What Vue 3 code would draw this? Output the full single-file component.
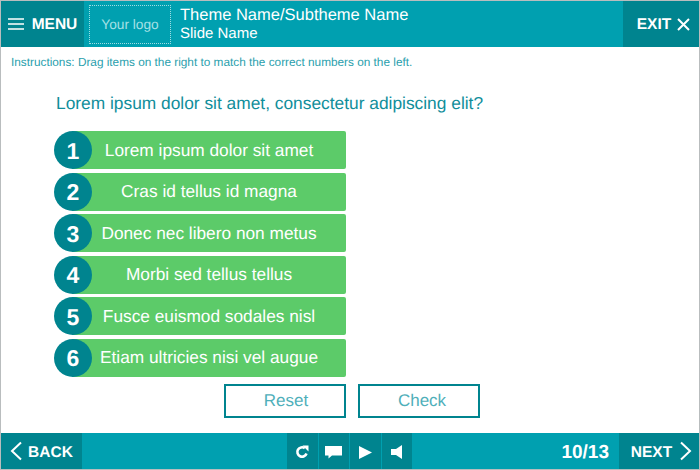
<template>
  <div class="slide">
    <header class="topbar">
      <button class="menu">
        <svg class="burger" width="16" height="12" viewBox="0 0 16 12"><path d="M0 1h16M0 6h16M0 11h16" stroke="#fff" stroke-width="1.4" /></svg>
        <span>MENU</span>
      </button>
      <div class="logo">Your logo</div>
      <div class="titles">
        <div class="theme">Theme Name/Subtheme Name</div>
        <div class="slide-name">Slide Name</div>
      </div>
      <button class="exit">
        <span>EXIT</span>
        <svg width="13" height="13" viewBox="0 0 13 13"><path d="M1 1l11 11M12 1L1 12" stroke="#fff" stroke-width="2" fill="none" /></svg>
      </button>
    </header>

    <main class="content">
      <p class="instructions">Instructions: Drag items on the right to match the correct numbers on the left.</p>
      <h1 class="question">Lorem ipsum dolor sit amet, consectetur adipiscing elit?</h1>
      <ul class="items">
        <li v-for="(item, i) in items" :key="item" class="item">
          <span class="num">{{ i + 1 }}</span>
          <span class="label">{{ item }}</span>
        </li>
      </ul>
      <div class="actions">
        <button class="action">Reset</button>
        <button class="action">Check</button>
      </div>
    </main>

    <footer class="bottombar">
      <button class="back">
        <svg width="13" height="20" viewBox="0 0 13 20"><path d="M11 1.500L2 10l9 8.500" stroke="#fff" stroke-width="2" fill="none" /></svg>
        <span>BACK</span>
      </button>
      <div class="controls">
        <button class="ctrl">
          <svg width="14" height="14" viewBox="0 0 14 14"><path d="M11.500 8.500A4.700 4.700 0 1 1 9.800 3.200" stroke="#fff" stroke-width="2.600" fill="none" /><path d="M7.500 0.500h6V6.500z" fill="#fff" /></svg>
        </button>
        <button class="ctrl">
          <svg width="17" height="14" viewBox="0 0 17 14"><path d="M0 1h17v9.500H7l-3.500 3v-3H0z" fill="#fff" /></svg>
        </button>
        <button class="ctrl">
          <svg width="13" height="13" viewBox="0 0 13 13"><path d="M0 0l13 6.500L0 13z" fill="#fff" /></svg>
        </button>
        <button class="ctrl">
          <svg width="12" height="14" viewBox="0 0 12 14"><path d="M11 0v14L5 10H0V4h5z" fill="#fff" /></svg>
        </button>
      </div>
      <div class="pager">10/13</div>
      <button class="next">
        <span>NEXT</span>
        <svg width="13" height="20" viewBox="0 0 13 20"><path d="M2 1.500L11 10l-9 8.500" stroke="#fff" stroke-width="2" fill="none" /></svg>
      </button>
    </footer>
  </div>
</template>

<script setup>
const items = [
  'Lorem ipsum dolor sit amet',
  'Cras id tellus id magna',
  'Donec nec libero non metus',
  'Morbi sed tellus tellus',
  'Fusce euismod sodales nisl',
  'Etiam ultricies nisi vel augue'
]
</script>

<style>
html, body {
  margin: 0;
  background: #fff;
}
</style>

<style scoped>
.slide {
  box-sizing: border-box;
  width: 700px;
  height: 470px;
  display: flex;
  flex-direction: column;
  border: 1px solid #b9bdbe;
  font-family: "Liberation Sans", Arial, sans-serif;
  text-rendering: geometricPrecision;
  color: #fff;
  background: #fff;
}

button {
  font-family: inherit;
  text-rendering: inherit;
  border: none;
  padding: 0;
  color: #fff;
  background: none;
}

.topbar {
  flex: none;
  height: 46px;
  display: flex;
  align-items: center;
  background: #00a0b0;
}

.menu {
  width: 83px;
  height: 100%;
  display: flex;
  align-items: center;
  justify-content: center;
  gap: 8px;
  font-size: 15.500px;
  font-weight: bold;
  background: #00848f;
}

.menu span,
.exit span {
  padding-top: 2px;
}

.logo {
  box-sizing: border-box;
  width: 82px;
  height: 39px;
  margin-left: 5px;
  display: flex;
  align-items: center;
  justify-content: center;
  border: 1px dotted #9fdde3;
  font-size: 13.700px;
  color: #a5e0e6;
}

.titles {
  margin-left: 9px;
  flex: 1;
}

.theme {
  font-size: 16.500px;
  line-height: 19px;
}

.slide-name {
  font-size: 15px;
  line-height: 17px;
}

.exit {
  box-sizing: border-box;
  width: 76px;
  height: 100%;
  padding-left: 5px;
  display: flex;
  align-items: center;
  justify-content: center;
  gap: 6px;
  font-size: 15.500px;
  font-weight: bold;
  background: #00848f;
}

.content {
  flex: 1;
  min-height: 0;
  padding: 9px 0 0 10px;
}

.instructions {
  margin: 0;
  font-size: 11.800px;
  line-height: 13px;
  color: #2aa0ad;
}

.question {
  margin: 24px 0 0 45px;
  font-size: 17.350px;
  line-height: 20px;
  font-weight: normal;
  color: #108e9b;
}

.items {
  list-style: none;
  margin: 18px 0 0 43px;
  padding: 0;
  width: 292px;
}

.item {
  height: 38px;
  margin-bottom: 3.600px;
  display: flex;
  align-items: center;
}

.num {
  flex: none;
  box-sizing: border-box;
  width: 38px;
  height: 38px;
  padding-top: 2px;
  margin-right: -20px;
  position: relative;
  border-radius: 50%;
  display: flex;
  align-items: center;
  justify-content: center;
  font-size: 23px;
  font-weight: bold;
  background: #00848f;
}

.label {
  flex: 1;
  height: 100%;
  display: flex;
  align-items: center;
  justify-content: center;
  font-size: 17.300px;
  border-radius: 0 2px 2px 0;
  background: #5ccb69;
}

.actions {
  margin: 7px 0 0 213px;
  display: flex;
  gap: 12px;
}

.action {
  box-sizing: border-box;
  width: 122px;
  height: 34px;
  padding-left: 2px;
  border: 2px solid #00848f;
  font-size: 17px;
  color: #4fafba;
  background: #fff;
}

.action + .action {
  padding-left: 6px;
}

.bottombar {
  flex: none;
  height: 36px;
  display: flex;
  align-items: center;
  background: #00a0b0;
}

.back {
  width: 81px;
  height: 100%;
  display: flex;
  align-items: center;
  justify-content: center;
  gap: 5px;
  font-size: 15.500px;
  font-weight: bold;
  background: #00848f;
}

.back span,
.next span {
  padding-top: 3px;
}

.controls {
  height: 100%;
  margin-left: 205px;
  display: flex;
  gap: 1px;
}

.ctrl {
  box-sizing: border-box;
  width: 30.500px;
  height: 100%;
  padding-top: 2px;
  display: flex;
  align-items: center;
  justify-content: center;
  background: #00848f;
}

.pager {
  margin-left: auto;
  margin-right: 10px;
  padding-top: 4px;
  font-size: 19px;
  font-weight: bold;
}

.next {
  box-sizing: border-box;
  width: 80px;
  height: 100%;
  padding-left: 5px;
  display: flex;
  align-items: center;
  justify-content: center;
  gap: 7px;
  font-size: 15.500px;
  font-weight: bold;
  background: #00848f;
}
</style>
